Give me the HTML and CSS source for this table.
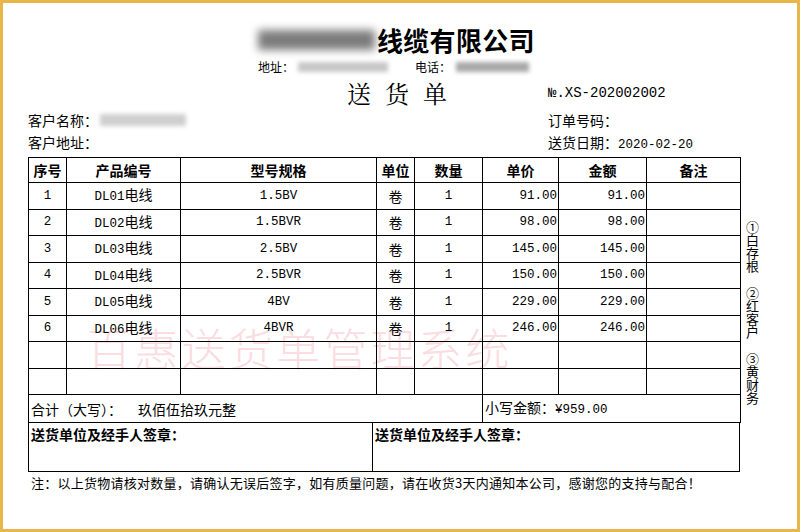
FILE: index.html
```html
<!DOCTYPE html>
<html lang="zh">
<head>
<meta charset="utf-8">
<title>送货单</title>
<link rel="stylesheet" href="styles.css">
</head>
<body>
<div class="page">
  <div class="watermark">百惠送货单管理系统</div>
  <div class="head">
    <div class="company"><span class="blur blur-title"></span>线缆有限公司</div>
    <div class="contact"><span>地址：</span><span class="blur blur-addr"></span><span class="tel">电话：</span><span class="blur blur-tel"></span></div>
  </div>
  <div class="row-grid doc-row">
    <div class="doc-title">送货单</div>
    <div class="doc-no">№.XS-202002002</div>
  </div>
  <div class="row-grid info">
    <div class="cell-flex">客户名称：<span class="blur blur-cust"></span></div>
    <div>订单号码：</div>
    <div>客户地址：</div>
    <div>送货日期：<span class="mono">2020-02-20</span></div>
  </div>
  <div class="main">
    <div class="sheet">
      <table>
        <colgroup>
          <col style="width:38px"><col style="width:114px"><col style="width:196px"><col style="width:38px"><col style="width:68px"><col style="width:76px"><col style="width:88px"><col style="width:94px">
        </colgroup>
        <thead>
          <tr><th>序号</th><th>产品编号</th><th>型号规格</th><th>单位</th><th>数量</th><th>单价</th><th>金额</th><th>备注</th></tr>
        </thead>
        <tbody>
          <tr><td>1</td><td>DL01<span class="cn">电线</span></td><td>1.5BV</td><td class="cn">卷</td><td>1</td><td class="r">91.00</td><td class="r">91.00</td><td></td></tr>
          <tr><td>2</td><td>DL02<span class="cn">电线</span></td><td>1.5BVR</td><td class="cn">卷</td><td>1</td><td class="r">98.00</td><td class="r">98.00</td><td></td></tr>
          <tr><td>3</td><td>DL03<span class="cn">电线</span></td><td>2.5BV</td><td class="cn">卷</td><td>1</td><td class="r">145.00</td><td class="r">145.00</td><td></td></tr>
          <tr><td>4</td><td>DL04<span class="cn">电线</span></td><td>2.5BVR</td><td class="cn">卷</td><td>1</td><td class="r">150.00</td><td class="r">150.00</td><td></td></tr>
          <tr><td>5</td><td>DL05<span class="cn">电线</span></td><td>4BV</td><td class="cn">卷</td><td>1</td><td class="r">229.00</td><td class="r">229.00</td><td></td></tr>
          <tr><td>6</td><td>DL06<span class="cn">电线</span></td><td>4BVR</td><td class="cn">卷</td><td>1</td><td class="r">246.00</td><td class="r">246.00</td><td></td></tr>
          <tr><td></td><td></td><td></td><td></td><td></td><td></td><td></td><td></td></tr>
          <tr><td></td><td></td><td></td><td></td><td></td><td></td><td></td><td></td></tr>
          <tr class="total"><td colspan="5">合计（大写）：<span class="amount-words">玖佰伍拾玖元整</span></td><td colspan="3">小写金额：<span class="mono">¥959.00</span></td></tr>
        </tbody>
      </table>
      <div class="sign">
        <div class="sign-left">送货单位及经手人签章：</div>
        <div class="sign-right">送货单位及经手人签章：</div>
      </div>
      <p class="note">注：以上货物请核对数量，请确认无误后签字，如有质量问题，请在收货3天内通知本公司，感谢您的支持与配合！</p>
    </div>
    <div class="side">
      <div>①白存根</div>
      <div>②红客户</div>
      <div>③黄财务</div>
    </div>
  </div>
</div>
</body>
</html>
```

FILE: styles.css
```css
* { box-sizing: border-box; }
body {
  margin: 0;
  background: #fff;
  color: #000;
  font-family: "Noto Sans CJK SC", sans-serif;
}
.page {
  position: relative;
  z-index: 0;
  width: 800px;
  height: 532px;
  border: 3px solid #e8b64b;
  padding-left: 25px;
  overflow: hidden;
  background: #fff;
}
.watermark {
  position: absolute;
  z-index: -1;
  left: 84px;
  top: 322px;
  font-size: 44px;
  line-height: 44px;
  letter-spacing: 3.3px;
  font-weight: 300;
  color: #fadce1;
  white-space: nowrap;
}
.blur { display: inline-block; }
.head { padding-left: 230px; padding-top: 22px; }
.company {
  display: flex;
  align-items: center;
  font-size: 26px;
  font-weight: 700;
  line-height: 30px;
  letter-spacing: 0.3px;
}
.blur-title { width: 117px; height: 20px; margin-right: 2px; background: #7c7c7c; filter: blur(4px); }
.contact {
  display: flex;
  align-items: center;
  margin-top: 4px;
  font-size: 12px;
  line-height: 16px;
}
.blur-addr { width: 90px; height: 10px; margin-left: 4px; background: #c8c8c8; filter: blur(2px); }
.tel { margin-left: 27px; }
.blur-tel { width: 73px; height: 10px; margin-left: 5px; background: #a9a9a9; filter: blur(2px); }
.row-grid { display: grid; grid-template-columns: 520px 200px; }
.doc-row { margin-top: 3px; height: 30px; align-items: center; }
.doc-title {
  padding-left: 319px;
  font-family: "Noto Serif CJK SC", "Noto Sans CJK SC", serif;
  font-size: 24px;
  line-height: 30px;
  letter-spacing: 14px;
}
.doc-no { font-family: "Liberation Mono", monospace; font-size: 14px; }
.info { margin-top: 1px; font-size: 14px; line-height: 22px; }
.cell-flex { display: flex; align-items: center; }
.blur-cust { width: 86px; height: 12px; margin-left: 2px; background: #cfcfcf; filter: blur(2px); }
.mono { font-family: "Liberation Mono", monospace; font-size: 12.5px; }
.main { display: flex; margin-top: 1px; }
.sheet { width: 712px; }
table { border-collapse: collapse; width: 712px; table-layout: fixed; }
th, td { border: 1px solid #000; padding: 0 1px; line-height: 16px; }
th { height: 25px; font-size: 14px; font-weight: 700; }
td {
  height: 26.5px;
  text-align: center;
  font-family: "Liberation Mono", "Noto Sans CJK SC", monospace;
  font-size: 12.5px;
}
td.r { text-align: right; }
.cn, td.cn { font-family: "Noto Sans CJK SC", sans-serif; font-size: 14px; }
.total td {
  height: 28px;
  text-align: left;
  font-family: "Noto Sans CJK SC", sans-serif;
  font-size: 14px;
  padding-left: 2px;
}
.amount-words { margin-left: 16px; }
.sign {
  display: flex;
  height: 49px;
  border: 1px solid #000;
  border-top: 0;
  font-size: 14px;
  font-weight: 700;
  line-height: 20px;
}
.sign-left { width: 344px; border-right: 1px solid #000; padding: 1px 2px; }
.sign-right { flex: 1; padding: 1px 2px; }
.note {
  margin: 0;
  padding-left: 3px;
  font-size: 13px;
  line-height: 22px;
  letter-spacing: 0.25px;
}
.side { margin-left: 6px; padding-top: 63px; font-size: 13px; line-height: 13px; }
.side div { width: 13px; word-break: break-all; margin-bottom: 14px; }
```
